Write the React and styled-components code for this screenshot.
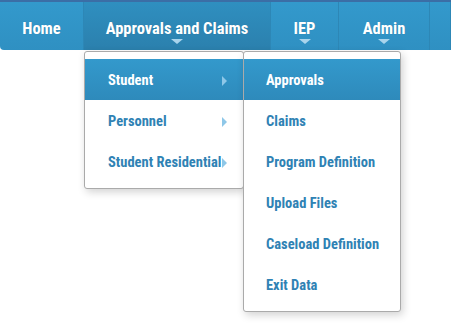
import React from "react"
import styled, { createGlobalStyle } from "styled-components"

const GlobalStyle = createGlobalStyle`
  body {
    margin: 0;
    background: #ffffff;
    font-family: Roboto, "Liberation Sans", Arial, sans-serif;
    font-stretch: condensed;
  }
`;

const Page = styled.div`
  width: 451px;
  height: 331px;
  border-top: 2px solid #3b6ea6;
  box-sizing: border-box;
  overflow: hidden;
`;

const Nav = styled.ul`
  display: flex;
  margin: 0;
  padding: 0;
  list-style: none;
  height: 48px;
  background: linear-gradient(#3399cc, #2f90c2);
  border-bottom-left-radius: 4px;
`;

const NavItem = styled.li`
  position: relative;
  display: flex;
  flex-direction: column;
  align-items: center;
  padding-top: 17px;
  width: ${p => p.$w}px;
  box-sizing: border-box;
  border-right: 1px solid #2d87b6;
  background: ${p => p.$active ? "linear-gradient(#2f8fc0, #2b80ad)" : "transparent"};
  color: #ffffff;
  font-weight: bold;
  font-size: 16.5px;
  text-shadow: 0 0 1px rgba(0, 0, 0, 0.15);
`;

const NavLabel = styled.span`
  display: block;
  line-height: 20px;
  height: 20px;
`;

const Caret = styled.span`
  width: 0;
  height: 0;
  border-left: 6px solid transparent;
  border-right: 6px solid transparent;
  border-top: 5px solid #a9d4ec;
  visibility: ${p => p.$hidden ? "hidden" : "visible"};
`;

const Menu = styled.ul`
  position: absolute;
  top: 49px;
  left: ${p => p.$left}px;
  width: ${p => p.$w}px;
  margin: 0;
  padding: 7px 0 6px;
  list-style: none;
  background: #ffffff;
  border: 1px solid #aaaaaa;
  border-radius: 3px;
  box-sizing: border-box;
  box-shadow: 2px 3px 8px rgba(0, 0, 0, 0.18);
  text-align: left;
  z-index: ${p => p.$z};
`;

const MenuItem = styled.li`
  display: flex;
  align-items: center;
  height: 41px;
  box-sizing: border-box;
  padding: 2px 16px 0 ${p => p.$pad}px;
  font-size: 14.5px;
  font-weight: bold;
  white-space: nowrap;
  color: ${p => p.$active ? "#ffffff" : "#2f82b4"};
  background: ${p => p.$active ? "linear-gradient(#3399cc, #2e8abb)" : "transparent"};
  text-shadow: none;
`;

const SubArrow = styled.span`
  margin-left: auto;
  flex-shrink: 0;
  width: 0;
  height: 0;
  border-top: 5px solid transparent;
  border-bottom: 5px solid transparent;
  border-left: 5px solid #8ec7e8;
`;

const navItems = [
  { label: "Home", w: 84 },
  { label: "Approvals and Claims", w: 187, active: true, caret: true },
  { label: "IEP", w: 68, caret: true },
  { label: "Admin", w: 91, caret: true },
  { label: "", w: 21 },
];

const studentMenu = [
  { label: "Student", active: true },
  { label: "Personnel" },
  { label: "Student Residential" },
];

const subMenu = [
  "Approvals",
  "Claims",
  "Program Definition",
  "Upload Files",
  "Caseload Definition",
  "Exit Data",
];

const App = () => (
  <Page>
    <GlobalStyle />
    <Nav>
      {navItems.map((item, i) => (
        <NavItem key={i} $w={item.w} $active={item.active}>
          <NavLabel>{item.label}</NavLabel>
          <Caret $hidden={!item.caret} />
          {item.active && (
            <>
              <Menu $left={0} $w={160} $z={2}>
                {studentMenu.map(m => (
                  <MenuItem key={m.label} $active={m.active} $pad={23}>
                    {m.label}
                    <SubArrow />
                  </MenuItem>
                ))}
              </Menu>
              <Menu $left={159} $w={158} $z={3}>
                {subMenu.map((m, j) => (
                  <MenuItem key={m} $active={j === 0} $pad={22}>
                    {m}
                  </MenuItem>
                ))}
              </Menu>
            </>
          )}
        </NavItem>
      ))}
    </Nav>
  </Page>
)

export default App
